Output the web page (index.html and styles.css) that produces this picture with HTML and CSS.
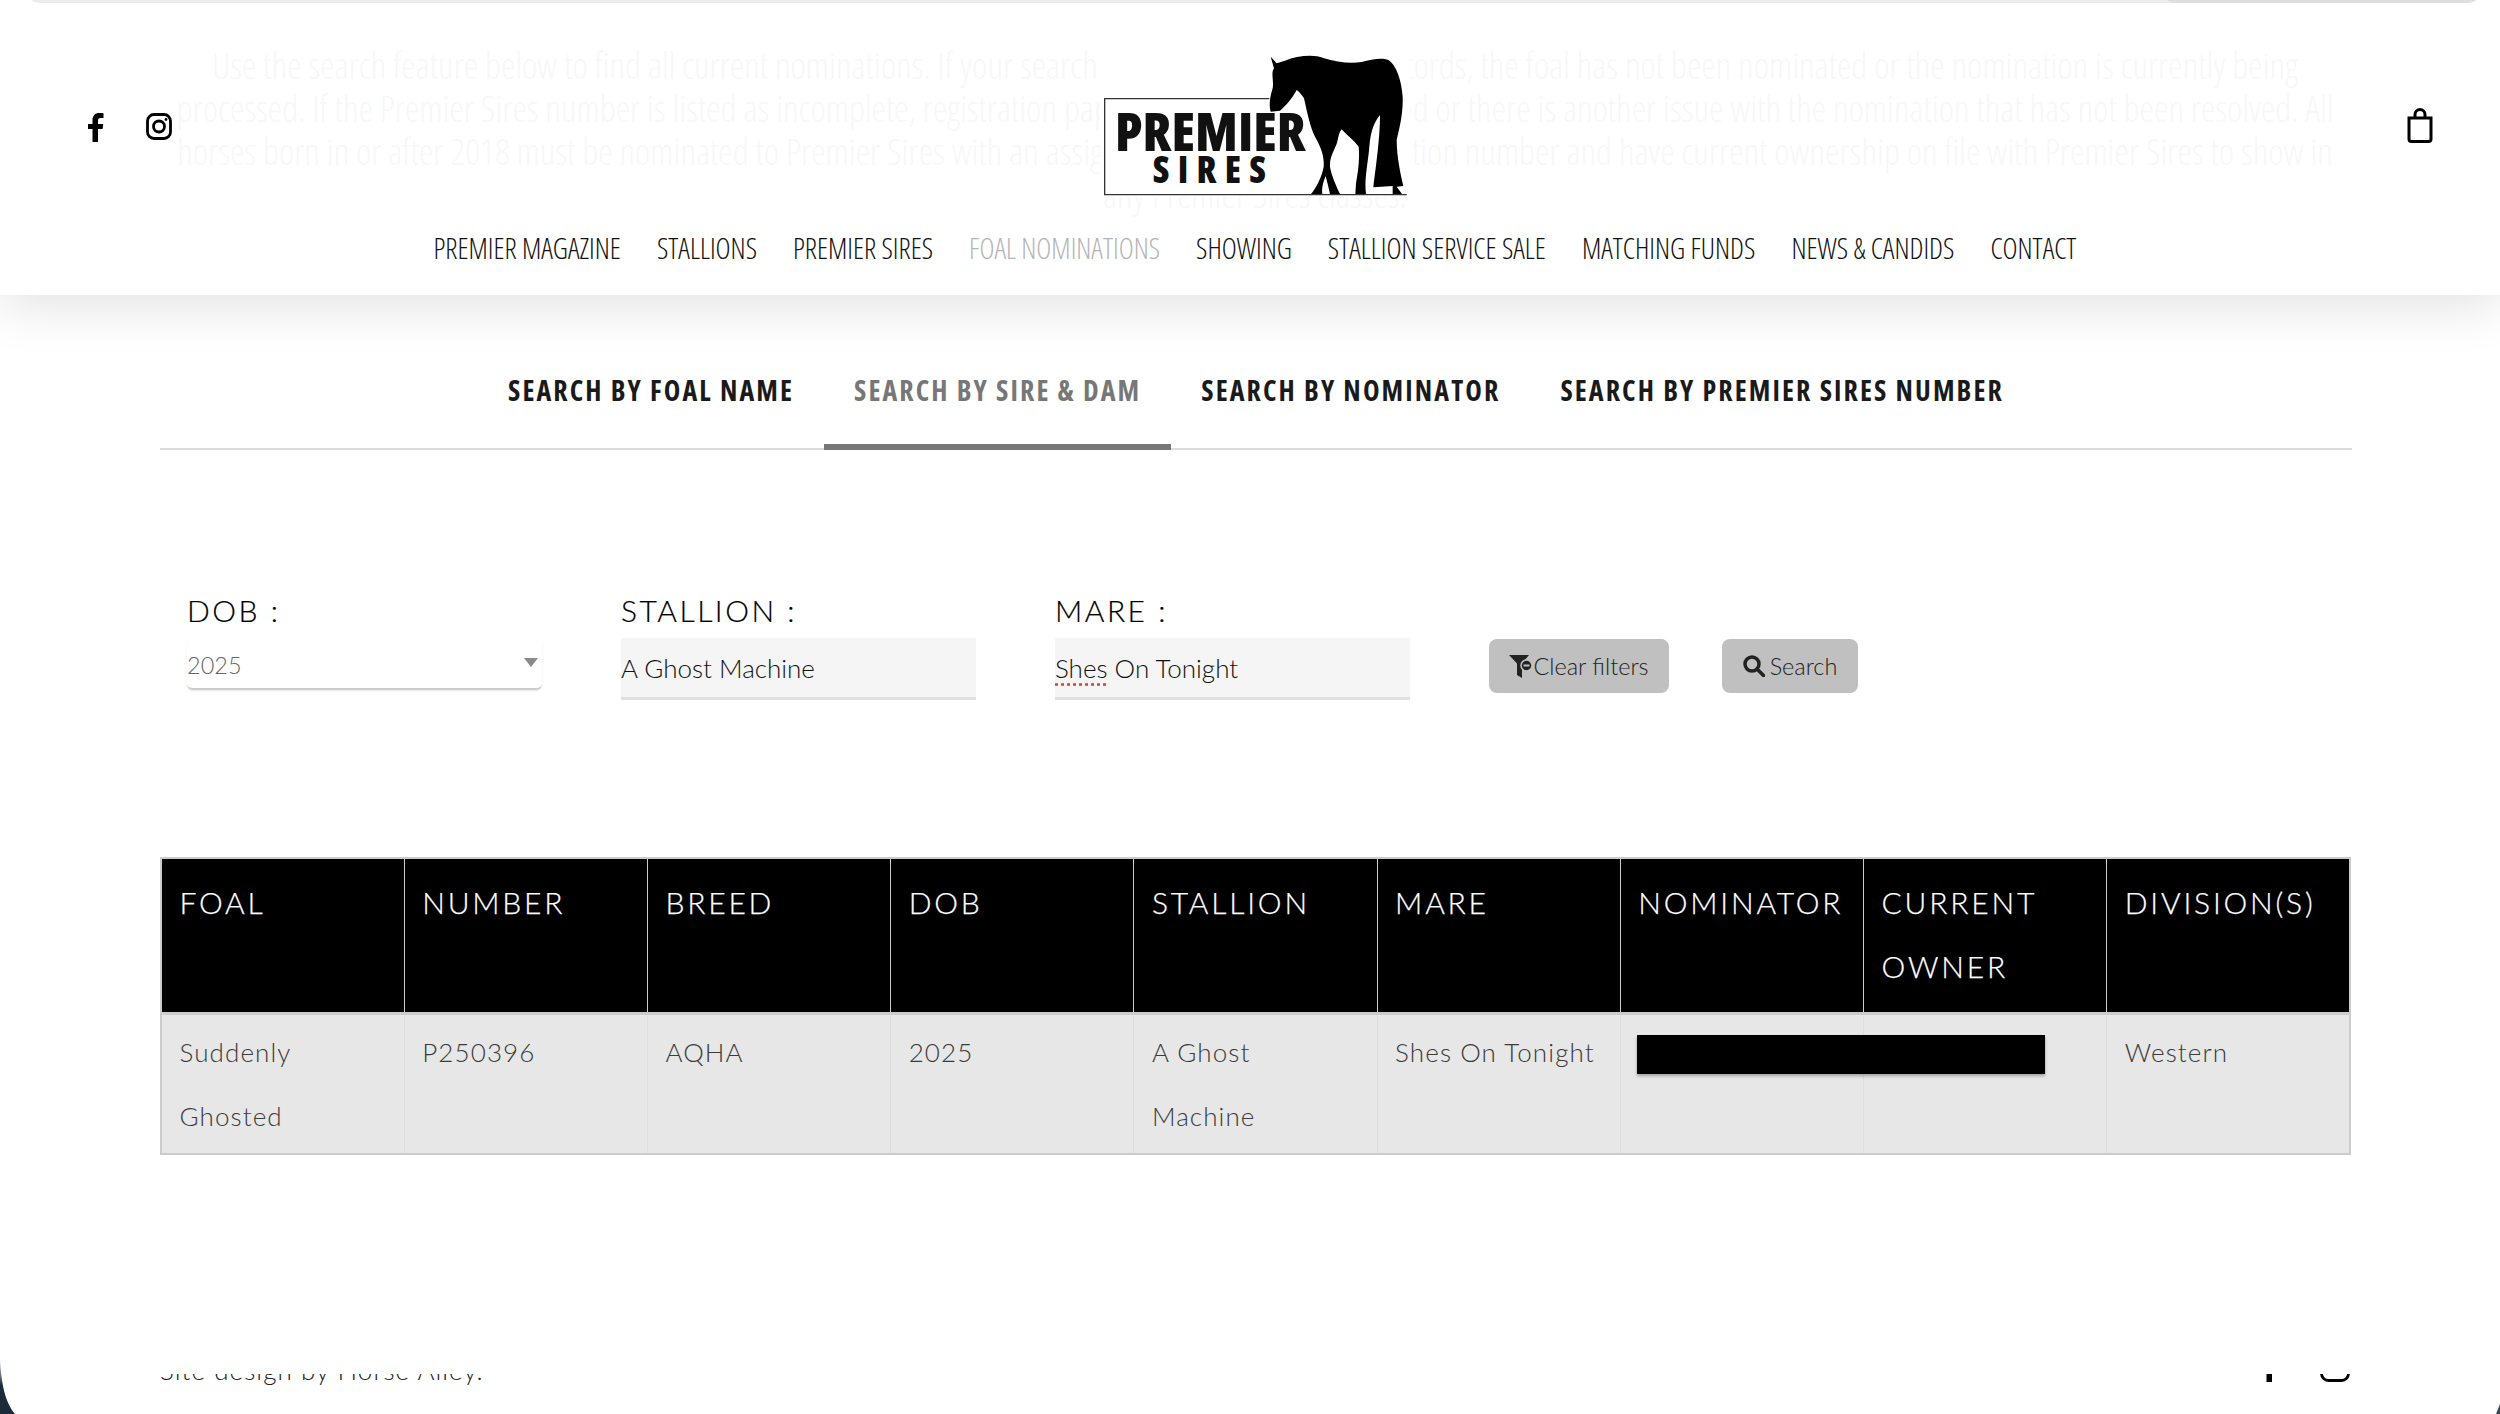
FILE: index.html
```html
<!DOCTYPE html>
<html lang="en">

<head>
    <meta charset="UTF-8">
    <meta name="viewport" content="width=device-width, initial-scale=1.0">
    <title>Foal Nominations</title>
    <link rel="stylesheet" href="styles.css">
</head>

<body>

    <div class="page">
        <div class="topStrip"><span class="topStripDark"></span></div>

        <header class="siteHeader">
            <p class="ghostText">
                Use the search feature below to find all current nominations. If your search did not return any foal records, the foal has not been nominated or the nomination is currently being<br>
                processed. If the Premier Sires number is listed as incomplete, registration papers have not been received or there is another issue with the nomination that has not been resolved. All<br>
                horses born in or after 2018 must be nominated to Premier Sires with an assigned Premier Sires nomination number and have current ownership on file with Premier Sires to show in<br>
                any Premier Sires classes.
            </p>

            <div class="headerTop">
                <div class="social">
                    <a href="#" class="socialLink">
                        <svg width="16" height="29" viewBox="0 0 16 29"><path d="M4.5 29V16H0v-5h4.500V7.200C4.500 2.600 7.200 0 11.300 0c1.900 0 3.700.2 4.200.3v4.600h-2.800c-2.200 0-2.700 1.100-2.700 2.700V11h5.300l-.8 5h-4.500v13z" fill="#000"/></svg>
                    </a>
                    <a href="#" class="socialLink">
                        <svg width="26" height="27" viewBox="0 0 26 27" fill="none" stroke="#000" stroke-width="2.800"><rect x="1.500" y="1.500" width="23" height="24" rx="6.500"/><circle cx="13" cy="13.500" r="5.500"/><circle cx="20" cy="6.500" r="1.400" fill="#000" stroke="none"/></svg>
                    </a>
                </div>

                <a href="#" class="logo">
                    <svg width="340" height="170" viewBox="0 0 1020 510">
                        <rect x="60" y="0" width="930" height="472" fill="#fff"/>
                        <path d="M568 176H74V464H980" fill="none" stroke="#333" stroke-width="4"/>
                        <path d="M572 50L590 70L615 62C650 48 700 42 730 54C770 66 810 72 845 66C875 58 905 52 925 60C950 75 965 125 968 170C970 220 958 265 950 300C950 350 962 405 970 438L950 440L966 462L938 462L938 438L880 442C886 390 900 300 900 225C884 245 872 270 868 320C864 370 852 420 858 462L826 462L828 430C833 400 840 360 836 320C820 300 800 285 785 268C778 276 775 290 772 305C764 330 748 350 750 380C755 410 770 440 780 462L750 462L745 440L737 408C730 425 724 445 727 462L693 462C708 445 726 410 731 380C733 350 725 325 705 290C690 260 682 220 672 175C665 165 658 155 650 150C640 170 620 195 600 212L572 215C566 195 570 170 578 145C582 120 572 100 582 85Z" fill="#000"/>
                        <text x="105" y="334" textLength="572" lengthAdjust="spacingAndGlyphs" class="logoBig">PREMIER</text>
                        <text x="218" y="430" textLength="340" class="logoSmall">SIRES</text>
                    </svg>
                </a>

                <a href="#" class="cart">
                    <svg width="26" height="35" viewBox="0 0 26 35" fill="none" stroke="#000" stroke-width="3"><path d="M2 10h22v21a2.500 2.500 0 0 1-2.500 2.500h-17A2.500 2.500 0 0 1 2 31z"/><path d="M8 10V6.500a5 5 0 0 1 10 0V10"/></svg>
                </a>
            </div>

            <nav class="mainNav">
                <a href="#">PREMIER MAGAZINE</a>
                <a href="#">STALLIONS</a>
                <a href="#">PREMIER SIRES</a>
                <a href="#" class="current">FOAL NOMINATIONS</a>
                <a href="#">SHOWING</a>
                <a href="#">STALLION SERVICE SALE</a>
                <a href="#">MATCHING FUNDS</a>
                <a href="#">NEWS &amp; CANDIDS</a>
                <a href="#">CONTACT</a>
            </nav>
        </header>

        <main class="content">
            <div class="tabs">
                <a href="#">SEARCH BY FOAL NAME</a>
                <a href="#" class="activeTab">SEARCH BY SIRE &amp; DAM</a>
                <a href="#">SEARCH BY NOMINATOR</a>
                <a href="#">SEARCH BY PREMIER SIRES NUMBER</a>
            </div>

            <form class="filters">
                <div class="field">
                    <label>DOB :</label>
                    <div class="fakeSelect">2025<span class="arrow"></span></div>
                </div>
                <div class="field">
                    <label for="stallion">STALLION :</label>
                    <input type="text" id="stallion" value="A Ghost Machine">
                </div>
                <div class="field">
                    <label for="mare">MARE :</label>
                    <div class="fakeInput"><span class="misspelled">Shes</span> On Tonight</div>
                </div>
                <div class="buttons">
                    <button type="button" class="btn btnClear">
                        <svg width="24" height="24" viewBox="0 0 24 24"><path d="M0 1h20l-7 8.500V24l-5-3V9.500z" fill="#222"/><circle cx="17.500" cy="11.500" r="5.500" fill="#222" stroke="#c0c0c0" stroke-width="1.500"/><rect x="14.500" y="10.500" width="6" height="2" fill="#c0c0c0"/></svg>Clear filters
                    </button>
                    <button type="button" class="btn btnSearch">
                        <svg width="22" height="22" viewBox="0 0 22 22" fill="none" stroke="#222" stroke-width="3.500"><circle cx="9" cy="9" r="7"/><path d="M14 14l6.500 6.500" stroke-linecap="round"/></svg> Search
                    </button>
                </div>
            </form>

            <table class="results">
                <thead>
                    <tr>
                        <th>FOAL</th>
                        <th>NUMBER</th>
                        <th>BREED</th>
                        <th>DOB</th>
                        <th>STALLION</th>
                        <th>MARE</th>
                        <th>NOMINATOR</th>
                        <th>CURRENT OWNER</th>
                        <th>DIVISION(S)</th>
                    </tr>
                </thead>
                <tbody>
                    <tr>
                        <td>Suddenly Ghosted</td>
                        <td>P250396</td>
                        <td>AQHA</td>
                        <td>2025</td>
                        <td>A Ghost Machine</td>
                        <td>Shes On Tonight</td>
                        <td class="redactedCell"><span class="redacted"></span></td>
                        <td></td>
                        <td>Western</td>
                    </tr>
                </tbody>
            </table>
        </main>

        <footer class="siteFooter">
            <div class="footerInner">
                <span>Site design by Horse Alley.</span>
                <div class="footerIcons">
                    <svg width="16" height="29" viewBox="0 0 16 29"><path d="M4.500 29V16H0v-5h4.500V7.200C4.500 2.600 7.200 0 11.300 0c1.900 0 3.700.2 4.200.3v4.600h-2.800c-2.200 0-2.700 1.100-2.700 2.700V11h5.300l-.8 5h-4.500v13z" fill="#000"/></svg>
                    <svg width="30" height="30" viewBox="0 0 30 30" fill="none" stroke="#000" stroke-width="2.800"><rect x="1.500" y="1.500" width="27" height="27" rx="7"/></svg>
                </div>
            </div>
        </footer>

        <svg class="cornerLeft" width="16" height="58" viewBox="0 0 16 58">
            <defs>
                <linearGradient id="cornerFade" x1="0" y1="0" x2="0" y2="1">
                    <stop offset="0" stop-color="#fff"/>
                    <stop offset="0.5" stop-color="#1c2b38"/>
                </linearGradient>
            </defs>
            <path d="M0 0C1 28 5 46 15 58H0z" fill="url(#cornerFade)"/>
        </svg>
        <span class="cornerRight"></span>
    </div>

</body>

</html>
```

FILE: styles.css
```css
* {
    box-sizing: border-box;
}

body {
    margin: 0;
    padding: 0;
    background-color: #fff;
    font-family: "Lato", "Open Sans", sans-serif;
    font-weight: 300;
    color: #222;
}

a {
    color: inherit;
    text-decoration: none;
}

.page {
    position: relative;
    width: 2500px;
    height: 1414px;
    overflow: hidden;
    display: flex;
    flex-direction: column;
}

.topStrip {
    position: absolute;
    top: -20px;
    left: 26px;
    right: 18px;
    height: 23px;
    background-color: #ebebeb;
    border-radius: 0 0 14px 14px;
    z-index: 3;
    overflow: hidden;
}

.topStripDark {
    position: absolute;
    top: 0;
    bottom: 0;
    right: 0;
    width: 320px;
    background-color: #dedede;
    border-radius: 0 0 14px 14px;
}

/* header */
.siteHeader {
    position: relative;
    height: 295px;
    flex-shrink: 0;
    background-color: #fff;
    box-shadow: 0 10px 50px rgba(0, 0, 0, 0.12);
    z-index: 2;
}

.ghostText {
    position: absolute;
    top: 44px;
    left: 10px;
    right: 0;
    margin: 0;
    text-align: center;
    font-family: "Open Sans", sans-serif;
    font-stretch: 75%;
    font-weight: 300;
    font-size: 36.500px;
    line-height: 43px;
    white-space: nowrap;
    color: #f7f7f7;
}

.headerTop {
    position: relative;
    height: 210px;
    padding: 0 67px;
    display: flex;
    justify-content: space-between;
    align-items: flex-start;
}

.social {
    display: flex;
    gap: 42px;
    margin-top: 113px;
    padding-left: 21px;
    width: 300px;
}

.socialLink {
    display: block;
    height: 29px;
}

.logo {
    display: block;
    margin-top: 40px;
    height: 170px;
    line-height: 0;
}

.logoBig {
    font-family: "Open Sans", sans-serif;
    font-stretch: 75%;
    font-weight: 800;
    font-size: 160px;
    fill: #111;
}

.logoSmall {
    font-family: "Open Sans", sans-serif;
    font-stretch: 75%;
    font-weight: 800;
    font-size: 110px;
    fill: #111;
}

.cart {
    display: flex;
    justify-content: flex-end;
    width: 300px;
    margin-top: 108px;
}

.mainNav {
    position: relative;
    display: flex;
    justify-content: center;
    gap: 36px;
    padding-left: 10px;
    font-family: "Open Sans", sans-serif;
    font-stretch: 75%;
    font-weight: 300;
    font-size: 28.500px;
    line-height: 76px;
    color: #111;
}

.mainNav .current {
    color: #b5b5b5;
}

/* tabs */
.content {
    flex: 1;
    padding: 0 148px 0 160px;
}

.tabs {
    display: flex;
    justify-content: center;
    height: 155px;
    padding-top: 64px;
    border-bottom: 2px solid #ddd;
    font-family: "Open Sans", sans-serif;
    font-stretch: 75%;
    font-weight: 700;
    font-size: 28px;
    letter-spacing: 2.100px;
    color: #1a1a1a;
}

.tabs a {
    display: block;
    height: 91px;
    padding: 0 30px;
    line-height: 62px;
}

.tabs .activeTab {
    color: #777;
    border-bottom: 6px solid #777;
}

/* filters */
.filters {
    display: flex;
    align-items: flex-start;
    height: 407px;
    padding: 140px 0 0 27px;
}

.field {
    width: 355px;
    margin-right: 79px;
}

.field label {
    display: block;
    height: 48px;
    font-size: 30px;
    line-height: 40px;
    letter-spacing: 2.500px;
    color: #000;
    -webkit-text-stroke: 0.2px #000;
}

.fakeSelect {
    position: relative;
    height: 52px;
    font-size: 23.500px;
    line-height: 54px;
    color: #666;
    background-color: #fff;
    border-bottom: 2px solid #ccc;
    border-radius: 6px;
    box-shadow: 0 1px 2px rgba(0, 0, 0, 0.1);
}

.arrow {
    position: absolute;
    top: 20px;
    right: 4px;
    border-left: 7px solid transparent;
    border-right: 7px solid transparent;
    border-top: 9px solid #8a8a8a;
}

.field input,
.fakeInput {
    display: block;
    width: 100%;
    height: 62px;
    padding: 0;
    margin: 0;
    border: none;
    border-bottom: 3px solid #e0e0e0;
    border-radius: 0;
    background-color: #f5f5f5;
    font-family: "Lato", sans-serif;
    font-weight: 300;
    font-size: 26px;
    line-height: 60px;
    color: #111;
}

.misspelled {
    text-decoration: underline dotted #e0413a;
    text-underline-offset: 5px;
}

.buttons {
    display: flex;
    gap: 53px;
    margin: 49px 0 0 0;
}

.btn {
    display: flex;
    align-items: center;
    justify-content: center;
    height: 54px;
    padding: 0;
    border: none;
    border-radius: 8px;
    background-color: #c0c0c0;
    font-family: "Lato", sans-serif;
    font-weight: 300;
    font-size: 23.500px;
    color: #222;
}

.btnClear {
    width: 180px;
}

.btnSearch {
    width: 136px;
    gap: 5px;
}

/* results table */
.results {
    width: 2191px;
    table-layout: fixed;
    border-collapse: collapse;
    border: 2px solid #ccc;
    font-size: 26px;
    letter-spacing: 1.100px;
}

.results th {
    background-color: #000;
    color: #fff;
    border: 1px solid #ccc;
    border-bottom: 3px solid #ccc;
    padding: 11px 17.500px 14px;
    text-align: left;
    vertical-align: top;
    font-weight: 300;
    font-size: 30px;
    line-height: 64px;
    letter-spacing: 2.800px;
    -webkit-text-stroke: 0.25px #fff;
}

.results td {
    background-color: #e7e7e7;
    border: 1px solid #ddd;
    border-bottom: 2px solid #ccc;
    padding: 5px 17.500px;
    vertical-align: top;
    line-height: 64px;
    height: 139px;
    color: #3a3a3a;
}

.redactedCell {
    position: relative;
}

.redacted {
    position: absolute;
    top: 20px;
    left: 16px;
    width: 408px;
    height: 39px;
    background-color: #000;
    box-shadow: 0 2px 3px rgba(0, 0, 0, 0.3);
}

/* footer is cut off by the bottom of the window */
.siteFooter {
    position: absolute;
    left: 160px;
    right: 148px;
    top: 1374px;
    height: 12px;
    overflow: hidden;
}

.footerInner {
    display: flex;
    justify-content: space-between;
    margin-top: -24px;
    font-size: 26px;
    line-height: 40px;
    letter-spacing: 1.050px;
    color: #222;
}

.footerIcons {
    display: flex;
    gap: 42px;
    margin-right: 2px;
    align-items: flex-end;
    height: 32px;
}

.cornerLeft {
    position: absolute;
    left: 0;
    bottom: 0;
}

.cornerRight {
    position: absolute;
    right: 0;
    bottom: 0;
    width: 0;
    height: 0;
    border-left: 4px solid transparent;
    border-bottom: 10px solid #3a4a55;
}
```
